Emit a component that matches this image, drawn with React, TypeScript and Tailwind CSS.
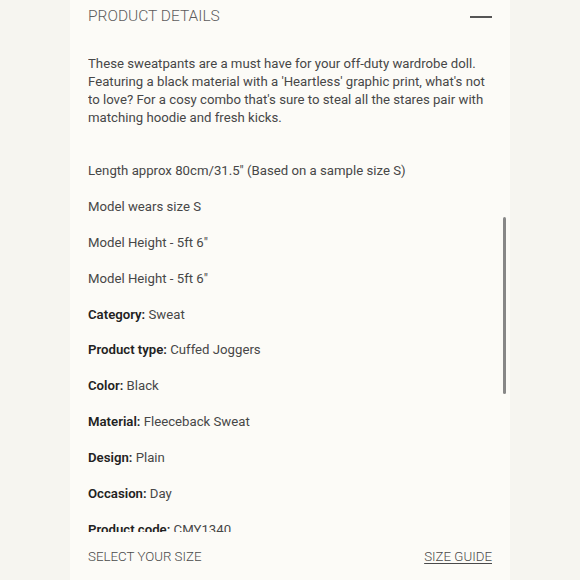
import React from 'react';

const specs = [
  { value: 'Length approx 80cm/31.5" (Based on a sample size S)' },
  { value: 'Model wears size S' },
  { value: 'Model Height - 5ft 6"' },
  { value: 'Model Height - 5ft 6"' },
  { label: 'Category:', value: 'Sweat' },
  { label: 'Product type:', value: 'Cuffed Joggers' },
  { label: 'Color:', value: 'Black' },
  { label: 'Material:', value: 'Fleeceback Sweat' },
  { label: 'Design:', value: 'Plain' },
  { label: 'Occasion:', value: 'Day' },
  { label: 'Product code:', value: 'CMY1340' },
];

export default function App() {
  return (
    <div className="w-[580px] h-[580px] bg-[#f6f5f0] flex justify-center overflow-hidden font-['Roboto',sans-serif]">
      <div className="relative w-[440px] h-full bg-[#fcfbf7] flex flex-col px-[18px]">
        {/* Header */}
        <div className="h-8 pt-[2px] flex items-center justify-between shrink-0">
          <h2 className="text-[15.5px] font-light text-[#5c5c5c]">PRODUCT DETAILS</h2>
          <span className="block w-[22px] h-[2px] bg-[#555]" />
        </div>

        {/* Scrollable content */}
        <div className="h-[500px] overflow-hidden pt-[23px] text-[13.2px] leading-[18px] text-[#474747]">
          <p className="mb-[35px]">
            These sweatpants are a must have for your off-duty wardrobe doll. Featuring a black material with a
            'Heartless' graphic print, what's not to love? For a cosy combo that's sure to steal all the stares pair
            with matching hoodie and fresh kicks.
          </p>
          {specs.map((s, i) => (
            <p key={i} className="mb-[17.9px]">
              {s.label && <span className="font-semibold text-[#222]">{s.label} </span>}
              {s.value}
            </p>
          ))}
        </div>

        {/* Scrollbar */}
        <div className="absolute left-[433px] top-[217px] w-[3px] h-[177px] bg-[#888] rounded-sm" />

        {/* Footer */}
        <div className="h-12 pt-[2px] flex items-center justify-between shrink-0 text-[13.3px] text-[#4a4a4a]">
          <span className="font-light">SELECT YOUR SIZE</span>
          <span className="font-light underline underline-offset-2">SIZE GUIDE</span>
        </div>
      </div>
    </div>
  );
}
